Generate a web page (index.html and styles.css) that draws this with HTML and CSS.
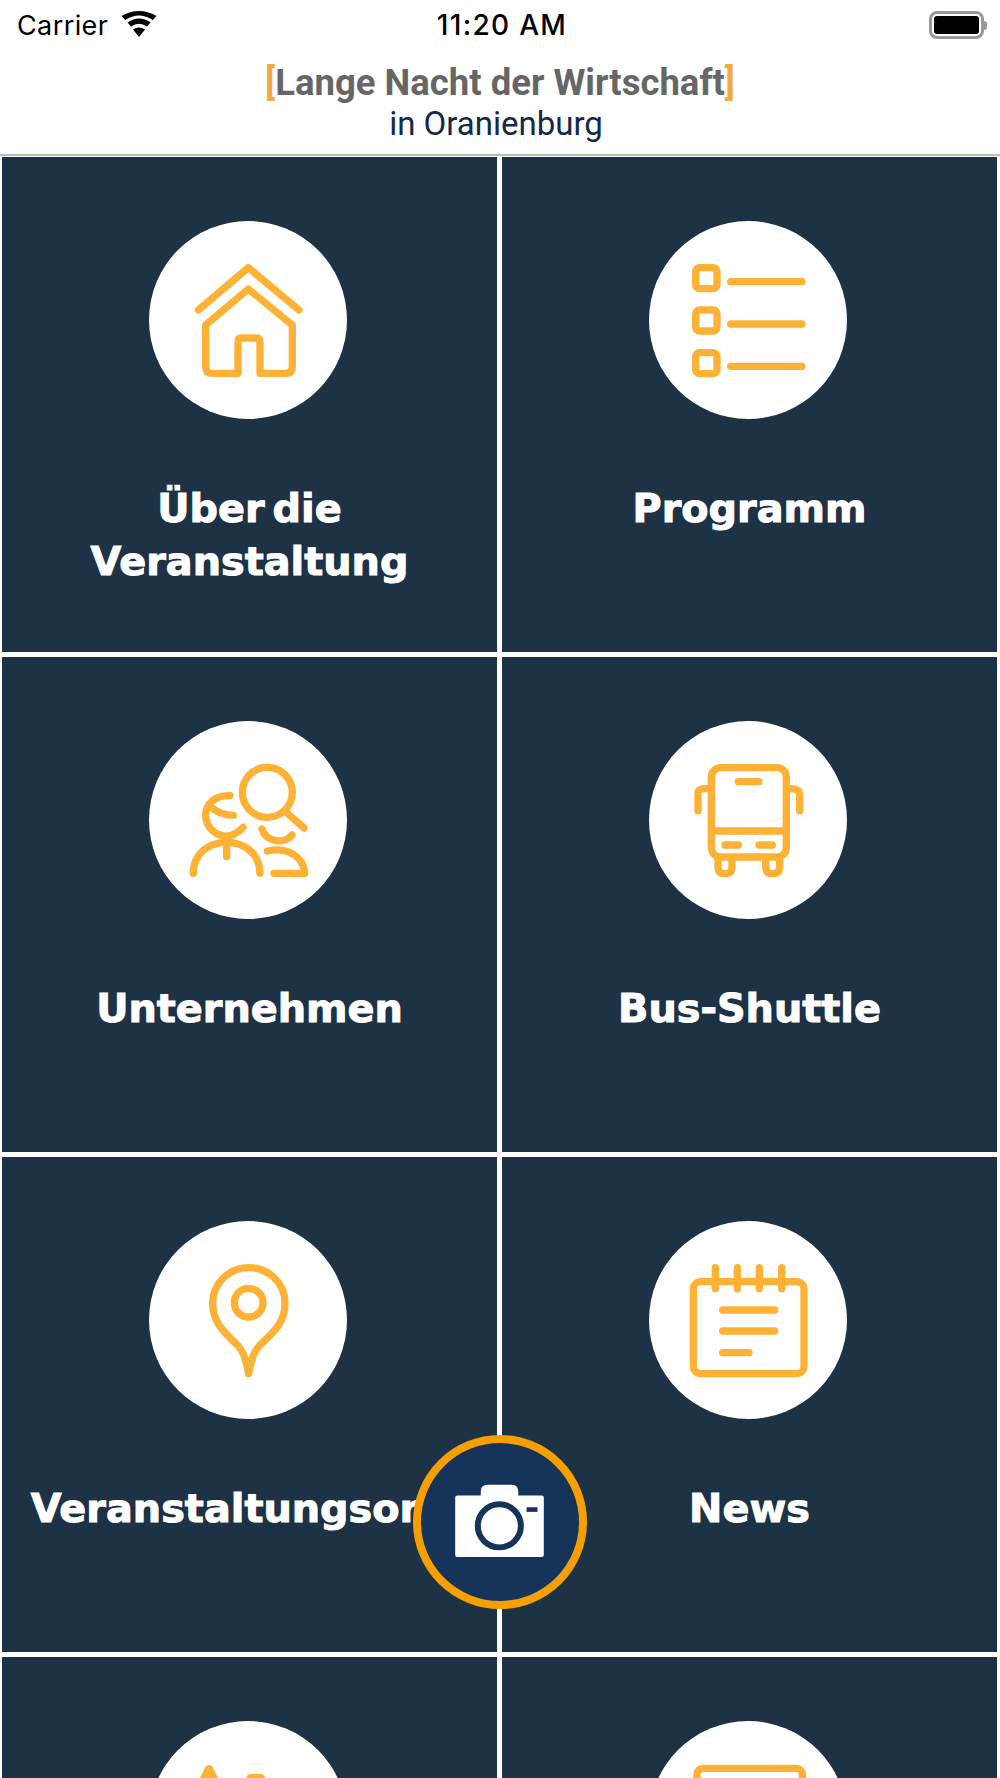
FILE: index.html
```html
<!DOCTYPE html>
<html lang="de">
<head>
    <meta charset="UTF-8">
    <title>Lange Nacht der Wirtschaft</title>
    <link rel="stylesheet" href="styles.css">
</head>
<body>
<div id="app">
    <div class="statusbar">
        <div class="status-left">
            <span class="carrier">Carrier</span>
            <svg class="wifi" viewBox="0 0 36 26">
                <path d="M18 26 L12 18.500 Q18 14.500 24 18.500 Z"/>
                <path d="M10 15.500 L6.500 11.500 Q18 3.500 29.500 11.500 L26 15.500 Q18 10 10 15.500 Z"/>
                <path d="M4.200 9 L0.500 5 Q18 -5 35.500 5 L31.800 9 Q18 0 4.200 9 Z"/>
            </svg>
        </div>
        <div class="status-time">11:20 AM</div>
        <div class="status-right">
            <div class="battery"><div class="battery-fill"></div></div>
            <div class="battery-tip"></div>
        </div>
    </div>
    <div class="header">
        <div class="title"><span class="bracket">[</span>Lange Nacht der Wirtschaft<span class="bracket">]</span></div>
        <div class="subtitle">in Oranienburg</div>
    </div>
    <div class="grid">
        <div class="tile">
            <div class="circle">
                <svg class="icon" viewBox="55 33 594 594">
                    <path d="M203 300 L353 173 L505 300"/>
                    <path d="M225 345 L353 237 L485 345 V470 Q485 490 465 490 H388 V395 Q388 384 377 384 H332 Q322 384 322 395 V490 H245 Q225 490 225 470 Z"/>
                </svg>
            </div>
            <div class="label">Über die<br>Veranstaltung</div>
        </div>
        <div class="tile">
            <div class="circle">
                <svg class="icon" viewBox="55 33 594 594">
                    <rect x="195" y="173" width="64" height="63" rx="12"/>
                    <rect x="195" y="300" width="64" height="63" rx="12"/>
                    <rect x="195" y="428" width="64" height="63" rx="12"/>
                    <path d="M300 215 H514 M300 342 H514 M300 469 H514"/>
                </svg>
            </div>
            <div class="label">Programm</div>
        </div>
        <div class="tile">
            <div class="circle">
                <svg class="icon" viewBox="55 33 594 594">
                    <circle cx="410" cy="247" r="75"/>
                    <path d="M470 310 L520 354"/>
                    <path d="M298 257 C250 255 225 285 225 315 C225 355 260 380 290 378 C310 378 325 365 337 352"/>
                    <path d="M240 290 Q265 315 308 316"/>
                    <path d="M188 490 C188 430 235 397 288 397 C340 397 388 430 388 490"/>
                    <path d="M288 397 V440"/>
                    <path d="M394 357 C405 395 460 405 484 375"/>
                    <path d="M410 423 C470 410 520 440 522 490 H430"/>
                </svg>
            </div>
            <div class="label">Unternehmen</div>
        </div>
        <div class="tile">
            <div class="circle">
                <svg class="icon" viewBox="55 33 594 594">
                    <rect x="242" y="173" width="225" height="268" rx="28"/>
                    <path d="M242 363 H467 M323 215 H385 M283 405 H323 M385 405 H425"/>
                    <path d="M202 302 V250 Q202 236 225 236 H242 M507 302 V255 Q507 236 480 236 H467"/>
                    <path d="M262 445 V470 Q262 491 283 491 Q304 491 304 470 V445 M405 445 V470 Q405 491 426 491 Q447 491 447 470 V445"/>
                </svg>
            </div>
            <div class="label">Bus-Shuttle</div>
        </div>
        <div class="tile">
            <div class="circle">
                <svg class="icon" viewBox="55 33 594 594">
                    <path d="M354 491 C345 450 340 425 320 405 C285 370 246 340 246 280 C246 215 300 173 354 173 C410 173 463 215 463 280 C463 340 425 370 388 405 C368 425 362 450 354 491 Z"/>
                    <circle cx="354" cy="278" r="43"/>
                </svg>
            </div>
            <div class="label label-long">Veranstaltungsort</div>
        </div>
        <div class="tile">
            <div class="circle">
                <svg class="icon" viewBox="55 33 594 594">
                    <rect x="188" y="215" width="332" height="276" rx="22"/>
                    <path d="M254 173 V236 M320 173 V236 M386 173 V236 M453 173 V236"/>
                    <path d="M276 300 H432 M276 363 H432 M276 428 H355"/>
                </svg>
            </div>
            <div class="label">News</div>
        </div>
        <div class="tile">
            <div class="circle">
                <svg class="icon icon-heavy" viewBox="55 33 594 594">
                    <path class="icon-solid" d="M235 178 L195 260 H275 Z"/>
                    <path d="M360 205 L390 205"/>
                    <path d="M415 228 L432 236"/>
                </svg>
            </div>
        </div>
        <div class="tile">
            <div class="circle">
                <svg class="icon" viewBox="55 33 594 594">
                    <rect x="199" y="175" width="316" height="276" rx="18"/>
                </svg>
            </div>
        </div>
    </div>
    <div class="camera">
        <svg class="camera-icon" viewBox="195 190 267 220">
            <path class="camera-body" d="M201 225 H272 V212 Q272 192 292 192 H365 Q385 192 385 212 V225 H456 Q462 225 462 231 V404 Q462 410 456 410 H201 Q195 410 195 404 V231 Q195 225 201 225 Z"/>
            <circle class="camera-lens" cx="328" cy="316" r="65"/>
            <rect class="camera-flash" x="410" y="260" width="33" height="14"/>
        </svg>
    </div>
</div>
</body>
</html>
```

FILE: styles.css
```css
*{
    margin: 0;
    padding: 0;
    box-sizing: border-box;
}
html,body{
    background: white;
    overflow: hidden;
}
#app{
    width: 1000px;
    height: 1778px;
    position: relative;
    overflow: hidden;
    font-family: "Roboto", "Liberation Sans", sans-serif;
}
.statusbar{
    height: 46px;
    padding: 4px 13px 0 17px;
    display: grid;
    grid-template-columns: 1fr auto 1fr;
    align-items: center;
    font-family: "Inter", "Liberation Sans", sans-serif;
    font-size: 27px;
    color: black;
}
.status-left{
    display: flex;
    align-items: center;
    gap: 13px;
}
.carrier{
    letter-spacing: 0.400px;
}
.wifi{
    width: 36px;
    height: 26px;
    margin-top: -2px;
}
.status-time{
    font-size: 28px;
    letter-spacing: 1.300px;
    font-weight: 500;
}
.status-right{
    display: flex;
    align-items: center;
    justify-content: flex-end;
}
.battery{
    width: 55px;
    height: 28px;
    border: 3px solid #999;
    border-radius: 8px;
    padding: 2px;
}
.battery-fill{
    height: 100%;
    background: black;
    border-radius: 3px;
}
.battery-tip{
    width: 3px;
    height: 9px;
    background: #999;
    border-radius: 0 3px 3px 0;
}
.header{
    height: 110px;
    padding-top: 17px;
    text-align: center;
    border-bottom: 2px solid #bbb;
}
.title{
    font-size: 36.500px;
    line-height: 40px;
    font-weight: 700;
    color: #666;
}
.bracket{
    color: #f5a83c;
}
.subtitle{
    padding-right: 8px;
    font-size: 33px;
    line-height: 41px;
    color: #14294a;
}
.grid{
    padding: 1px 0 0 2px;
    display: grid;
    grid-template-columns: 495px 495px;
    gap: 5px;
}
.tile{
    height: 495px;
    background: #1e3246;
    padding-top: 64px;
    display: flex;
    flex-direction: column;
    align-items: center;
}
.circle{
    width: 198px;
    height: 198px;
    margin-right: 4px;
    border-radius: 50%;
    background: white;
    flex-shrink: 0;
}
.icon{
    display: block;
    width: 198px;
    height: 198px;
    fill: none;
    stroke: #fdb235;
    stroke-width: 22;
    stroke-linecap: round;
    stroke-linejoin: round;
}
.icon-heavy{
    stroke-width: 26;
}
.icon-solid{
    fill: #fdb235;
}
.label{
    margin-top: 63px;
    font-family: "DejaVu Sans", "Liberation Sans", sans-serif;
    font-weight: 700;
    font-size: 39.800px;
    word-spacing: -6px;
    line-height: 53px;
    color: white;
    text-align: center;
    white-space: nowrap;
    -webkit-text-stroke: 1px white;
}
.label-long{
    margin-right: 30px;
}
.camera{
    width: 174px;
    height: 174px;
    position: absolute;
    left: 413px;
    top: 1435px;
    border: 8px solid #f5a000;
    border-radius: 50%;
    background: #16335a;
    display: flex;
    align-items: center;
    justify-content: center;
}
.camera-icon{
    width: 89px;
    height: 73px;
    margin: -4px 1px 0 0;
}
.camera-body{
    fill: white;
}
.camera-lens{
    fill: none;
    stroke: #16335a;
    stroke-width: 18;
}
.camera-flash{
    fill: #16335a;
}
```
